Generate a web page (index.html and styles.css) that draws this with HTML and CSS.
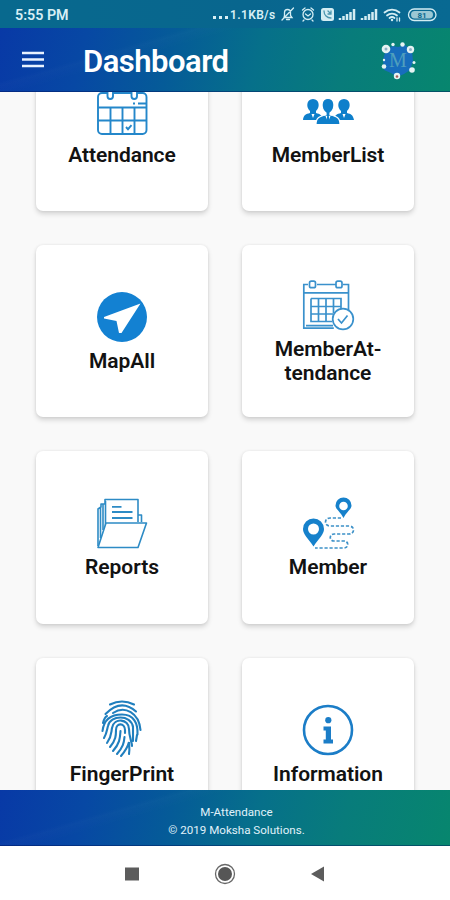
FILE: index.html
```
<!DOCTYPE html>
<html lang="en">
<head>
<meta charset="utf-8">
<title>Dashboard</title>
<link rel="stylesheet" href="styles.css">
</head>
<body>
<div class="phone">
  <div class="status">
    <span class="time">5:55 PM</span>
    <span class="dots"><i></i><i></i><i></i></span>
    <span class="speed">1.1KB/s</span>
    <svg class="status-icons" width="160" height="18" viewBox="0 0 160 18" fill="none" stroke="#d3edf3" stroke-width="1.3" stroke-linecap="round">
      <path d="M4 12.500h8l-1.500-2V7.500a3 3 0 0 0-6 0v3zM6.500 14.500h3M13.500 3 2 15"/>
      <circle cx="28" cy="9.500" r="5"/><path d="m25.500 9 2.500 2 2.500-2M22.500 5l2.500-2M33.500 5 31 3M24 15l-1 1M32 15l1 1"/>
      <rect x="41" y="3" width="13" height="13" rx="2.500" fill="#d3edf3" stroke="none"/>
      <path d="M44 6c0 4 3 7 7 7M48 6l3 3M51 6v3h-3" stroke="#4b96ae"/>
      <path stroke-width="2.500" stroke-linecap="butt" d="M60 15v-2M63.500 15v-4M67 15V9M70.500 15V7M74 15V4M82 15v-2M85.500 15v-4M89 15V9M92.500 15V7M96 15V4"/>
      <path stroke-width="1.800" d="M104.500 7.500a11.500 11.500 0 0 1 15 0M107 10.500a7.500 7.500 0 0 1 10 0M109.500 13a4 4 0 0 1 5 0"/>
      <circle cx="112" cy="15" r="1.200" fill="#d3edf3" stroke="none"/><path d="M117 13v3M119.500 13v3"/>
      <rect x="128.500" y="4" width="27.500" height="11.500" rx="5.700"/>
      <rect x="131" y="6" width="22" height="7.500" rx="3.700" fill="#9bc8d4" stroke="none"/>
      <text class="battery" x="142" y="13" text-anchor="middle">81</text>
    </svg>
  </div>

  <header class="toolbar texture">
    <svg class="menu" width="22" height="17" viewBox="0 0 22 17"><path d="M0 2h22M0 8.500h22M0 15h22" stroke="#e8f2ff" stroke-width="2.700"/></svg>
    <h1>Dashboard</h1>
    <svg class="logo" width="38" height="40" viewBox="0 0 38 40">
      <path d="M7 8 14 5l5 1 7-2 7 6 1 10-3 9-6 4-7 3-6-4-7-3-1-10z" fill="#176dbc"/>
      <text class="logo-letter" x="19" y="26" text-anchor="middle">M</text>
      <g fill="#e5f3f3"><circle cx="7" cy="8" r="4.300"/><circle cx="14" cy="3.500" r="1.700"/><circle cx="23.500" cy="3.500" r="2.200"/><circle cx="31.500" cy="8.500" r="3.700"/><circle cx="35" cy="21.500" r="1.500"/><circle cx="33" cy="29" r="2.800"/><circle cx="18" cy="35" r="3.200"/><circle cx="5" cy="25.500" r="2.300"/><circle cx="5" cy="19" r="1.200"/></g>
      <g fill="#8fb0c6"><circle cx="7" cy="8" r="1.500"/><circle cx="31.500" cy="8.500" r="1.500"/></g><circle cx="18" cy="35.500" r="1.300" fill="#a65b57"/>
    </svg>
  </header>

  <main>
    <div class="grid">
      <section class="card">
        <svg class="icon" viewBox="0 0 50 50" fill="none" stroke="#2487ca" stroke-width="1.900">
          <rect x="1" y="7" width="48.500" height="41" rx="4"/>
          <path d="M1 21.500h48.500M1 34.500h48.500M13.500 21.500V48M25.500 21.500V48M37.500 21.500V48M41 17.500h8M36 17.500h2"/>
          <g fill="#fff"><rect x="10.500" y="2" width="5.500" height="11" rx="2.700"/><rect x="34.500" y="2" width="5.500" height="11" rx="2.700"/></g>
          <path d="m29 41 2 2.200 3.500-4"/>
        </svg>
        <h2>Attendance</h2>
      </section>
      <section class="card">
        <svg class="icon" viewBox="0 0 50 50" fill="#0e7fcb">
          <path d="M0 34c.5-5 3-6 7-7v-2c-4-3-4-12 3-12s7 9 3 12v2c4 1 6 2 7 7z"/>
          <path d="M31 34c.5-5 3-6 7-7v-2c-4-3-4-12 3-12s7 9 3 12v2c4 1 6 2 7 7z"/>
          <path d="M13 38.500c0-7 3-8 10-9.500v-2c-6-5-5-14.500 2-14.500s8 9.500 2 14.500v2c7 1.500 10 2.500 10 9.500z" stroke="#fff" stroke-width="1.200"/>
          <path d="m22.500 30 2.500 6 2.500-6zM8.500 28l1.500 4 1.500-4zM39.500 28l1.500 4 1.500-4z" fill="#fff"/>
          <path d="m24.200 30-.7 6h3l-.7-6z"/>
        </svg>
        <h2>MemberList</h2>
      </section>
      <section class="card">
        <svg class="icon" viewBox="0 0 50 50"><circle cx="25" cy="25" r="25" fill="#1381d2"/><path d="M43.500 11.500 24.500 41 22 41 19.500 29 7 26.500 7 25z" fill="#fff"/></svg>
        <h2>MapAll</h2>
      </section>
      <section class="card">
        <svg class="icon" viewBox="0 0 50 50" fill="none" stroke="#3a91cc" stroke-width="1.700">
          <path d="M5 4.500H.8v43.700h30M14 4.500h19M40 4.500h5.500v26M1 12.800h44M3 45.700h27"/>
          <rect x="6.500" y="1.200" width="6" height="6.500" rx="1.800"/><rect x="33" y="1.200" width="6" height="6.500" rx="1.800"/>
          <path d="M8 18.500h30v12M8 18.500v23h21M8 26.500h30M8 34h22M15.500 18.500v23M23 18.500v23M30.500 18.500V33"/>
          <circle cx="40" cy="39" r="10.300" fill="#fff"/><path d="m35 39 3.500 4 6-7.500"/>
        </svg>
        <h2>MemberAt-<br>tendance</h2>
      </section>
      <section class="card">
        <svg class="icon" viewBox="0 0 50 50" fill="none" stroke="#2d8bc5" stroke-width="1.600" stroke-linejoin="round">
          <path d="M1 48V11l3-2V6h4V1.500h33V24M3.500 40V9M6 32V6M8.500 29V3M41 17h3.500v7"/>
          <path d="M9 25h40.500L41 49.500H1z" fill="#fff"/>
          <path d="M15 8.800h9.500M15 14h20.500M15 20h20.500" stroke-width="1.800"/>
        </svg>
        <h2>Reports</h2>
      </section>
      <section class="card">
        <svg class="icon" viewBox="0 0 50 50" fill="#1681cb">
          <path fill-rule="evenodd" d="M10.500 48.500C5 40 0 36.500 0 31a10.500 10.500 0 0 1 21 0c0 5.500-5 9-10.500 17.500zM10.500 25.500a5.500 5.500 0 1 0 0 11 5.500 5.500 0 0 0 0-11zM40.500 20C37 13 32.500 11.500 32.500 7.500a8 8 0 0 1 16 0c0 4-4.500 5.500-8 12.500zM40.500 3.700a4.300 4.300 0 1 0 0 8.600 4.300 4.300 0 0 0 0-8.600z"/>
          <path d="M38 20H27c-6 0-6 8 0 8h19c6 0 6 8 0 8H31c-5 0-5 7 0 7h10c5 0 5 7 0 7H12" fill="none" stroke="#3d91c8" stroke-width="1.700" stroke-dasharray="3.200 1.800"/>
        </svg>
        <h2>Member</h2>
      </section>
      <section class="card">
        <svg class="icon finger" viewBox="0 0 42 58" fill="none" stroke="#207fbe" stroke-width="2.100" stroke-linecap="round">
          <path d="M9 4.500Q21-1.500 33 4.500M4.500 14Q20-2 35 11.500M2 23C3 19 4 17 6 16M12 13C24 5 38 13 39.500 30M1.500 31C3 18 11 14.500 21 14.500c12 0 16 9 15.500 20"/>
          <path d="M3 38c3-5 3-9 4-12C9 15 30 14 32 27v14M6 43c5-7 4-10 5-15 2-11 17-9 17 1 0 8 3 13 3 17M9 47c6-7 6-12 6-17 0-8 9-7 9 0v3M12 51c7-8 7-13 7.500-20M16 54c6-7 7-11 7.500-17M20 56c6-7 7-10 8-14 0 4 1 7 0 12M36 35l-1 6"/>
        </svg>
        <h2>FingerPrint</h2>
      </section>
      <section class="card">
        <svg class="icon" viewBox="0 0 50 50" fill="#1b7dc7"><circle cx="25" cy="25" r="24" fill="none" stroke="#1b7dc7" stroke-width="2.600"/><circle cx="25.300" cy="15.200" r="3.100"/><path d="M20.500 21.500H28V34.500h2V38.500h-9.500V34.500h2.300V25.500h-2.300z"/></svg>
        <h2>Information</h2>
      </section>
    </div>
  </main>

  <footer class="texture">
    <div>M-Attendance</div>
    <div>© 2019 Moksha Solutions.</div>
  </footer>

  <nav>
    <svg width="22" height="22" viewBox="0 0 22 22"><rect x="4" y="4.500" width="14" height="13" fill="#5c5c5c"/></svg>
    <svg width="22" height="22" viewBox="0 0 22 22"><circle cx="11" cy="11" r="9.500" fill="none" stroke="#686868" stroke-width="1.300"/><circle cx="11" cy="11" r="7" fill="#565656"/></svg>
    <svg width="22" height="22" viewBox="0 0 22 22"><path d="M17 3.500v15L4 11z" fill="#5c5c5c"/></svg>
  </nav>
</div>
</body>
</html>
```
FILE: styles.css
```
* { box-sizing: border-box; }
body { margin: 0; font-family: Roboto, "Liberation Sans", sans-serif; }
.phone { width: 450px; height: 900px; display: flex; flex-direction: column; background: #fff; overflow: hidden; }
svg { display: block; flex: none; }

.status { flex: none; height: 28px; display: flex; align-items: center; padding: 0 10px 0 15px; background: linear-gradient(90deg, #08698e, #08668e 55%, #086992); color: #d8eff5; }
.time { font-size: 14.300px; font-weight: 600; padding-top: 2px; }
.dots { display: flex; gap: 3px; margin-left: auto; padding-top: 7px; }
.dots i { width: 3px; height: 3px; background: #d8eff5; }
.speed { font-size: 12px; font-weight: 600; letter-spacing: .35px; width: 50px; margin-left: 2px; padding-top: 1px; white-space: nowrap; }
.battery { font-size: 8px; font-weight: 700; fill: #08688e; stroke: none; }

.texture {
  background:
    linear-gradient(164deg, transparent 28%, rgba(255,255,255,.015) 30%, transparent 36%),
    linear-gradient(104deg, #0839a6 0%, #0748a4 19%, #055b98 38%, #06708a 57%, #087c7b 76%, #07866e 100%);
  border-bottom: 1px solid rgba(0,25,90,.45);
}
.toolbar { flex: none; height: 64px; display: flex; align-items: center; padding: 0 33px 0 22px; color: #fff; }
.menu { margin-top: -1px; }
h1 { margin: 4px auto 0 39px; font-size: 31px; line-height: 36px; font-weight: 600; letter-spacing: -.5px; }
.logo { margin-top: 3px; }
.logo-letter { font: 20px "Liberation Serif", serif; fill: #4f9fbd; }

main { flex: 1; min-height: 0; overflow: hidden; background: #f9f9f9; }
.grid { display: grid; grid-template-columns: 172px 172px; grid-auto-rows: 172.200px; gap: 34px; margin: -53px 0 0 36px; }
.card { display: flex; flex-direction: column; align-items: center; justify-content: center; padding-top: 3px; background: #fff; border-radius: 7px; box-shadow: 0 3px 5px rgba(0,0,0,.15), 0 0 3px rgba(0,0,0,.08); }
.icon { width: 50px; height: 50px; overflow: visible; }
.finger { width: 42px; height: 58px; margin: -5px 0 -3px; }
h2 { margin: 7px 0 0; font-size: 21px; line-height: 24px; font-weight: 600; letter-spacing: -.05px; color: #121212; text-align: center; }

footer { flex: none; height: 56px; padding: 13px 0 0 23px; color: #e0f2fa; font-size: 11.600px; font-weight: 400; line-height: 18px; text-align: center; }
nav { flex: none; height: 54px; display: flex; align-items: center; gap: 71px; padding: 1px 0 0 121px; background: #fff; }
```
